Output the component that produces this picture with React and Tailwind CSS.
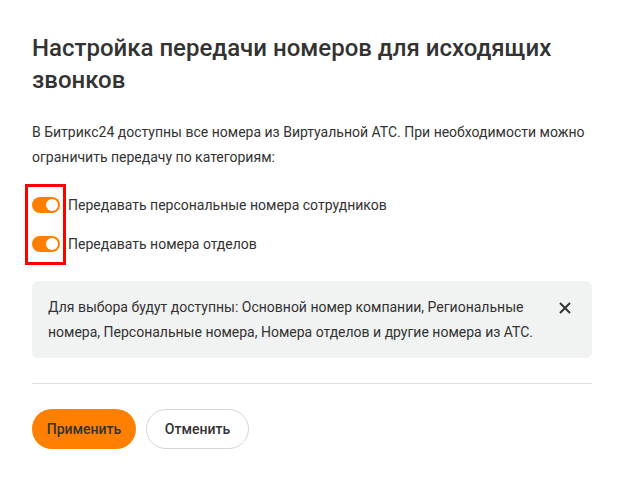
import React, { useState } from "react";

const Toggle = ({ on, onChange }) => (
  <button
    onClick={onChange}
    className={`relative w-[28px] h-[16px] rounded-full shrink-0 ${on ? "bg-[#ff7f00]" : "bg-gray-300"}`}
  >
    <span
      className={`absolute top-[2px] w-[12px] h-[12px] rounded-full bg-white ${on ? "left-[14px]" : "left-[2px]"}`}
    />
  </button>
);

const App = () => {
  const [personal, setPersonal] = useState(true);
  const [depts, setDepts] = useState(true);
  const [showInfo, setShowInfo] = useState(true);

  return (
    <div className="w-[624px] h-[481px] bg-white px-[32px] pt-[32px] text-[#333] font-['Roboto',sans-serif]">
      <h1 className="text-[24px] leading-[32px] font-medium text-[#333] pr-[40px]">
        Настройка передачи номеров для исходящих звонков
      </h1>
      <p className="mt-[24px] text-[14px] leading-[25px] text-[#333]">
        В Битрикс24 доступны все номера из Виртуальной АТС. При необходимости можно
        ограничить передачу по категориям:
      </p>

      <div className="relative mt-[14px] flex flex-col gap-[23px] py-[13px]">
        <div className="absolute left-[-7px] top-0 w-[41px] h-full border-[3px] border-[#ff0000]" />
        <label className="flex items-center gap-[8px] text-[14px] leading-[16px]">
          <Toggle on={personal} onChange={() => setPersonal(!personal)} />
          Передавать персональные номера сотрудников
        </label>
        <label className="flex items-center gap-[8px] text-[14px] leading-[16px]">
          <Toggle on={depts} onChange={() => setDepts(!depts)} />
          Передавать номера отделов
        </label>
      </div>

      {showInfo && (
        <div className="mt-[16px] flex items-start justify-between bg-[#f1f2f2] rounded-[6px] pl-[16px] pr-[20px] pt-[14px] pb-[13px]">
          <p className="text-[14px] leading-[25px] text-[#333]">
            Для выбора будут доступны: Основной номер компании, Региональные
            <br />
            номера, Персональные номера, Номера отделов и другие номера из АТС.
          </p>
          <button onClick={() => setShowInfo(false)} className="mt-[6px] text-[#333]">
            <svg width="14" height="14" viewBox="0 0 14 14">
              <path d="M2 2L12 12M12 2L2 12" stroke="currentColor" strokeWidth="2" />
            </svg>
          </button>
        </div>
      )}

      <div className="mt-[25px] border-t border-[#dfe0e3]" />

      <div className="mt-[25px] flex gap-[10px]">
        <button className="h-[40px] w-[104px] rounded-full bg-[#ff7f00] text-[14px] font-medium text-[#333]">
          Применить
        </button>
        <button className="h-[40px] w-[103px] rounded-full border border-[#d5d7db] bg-white text-[14px] font-medium text-[#333]">
          Отменить
        </button>
      </div>
    </div>
  );
};

export default App;
